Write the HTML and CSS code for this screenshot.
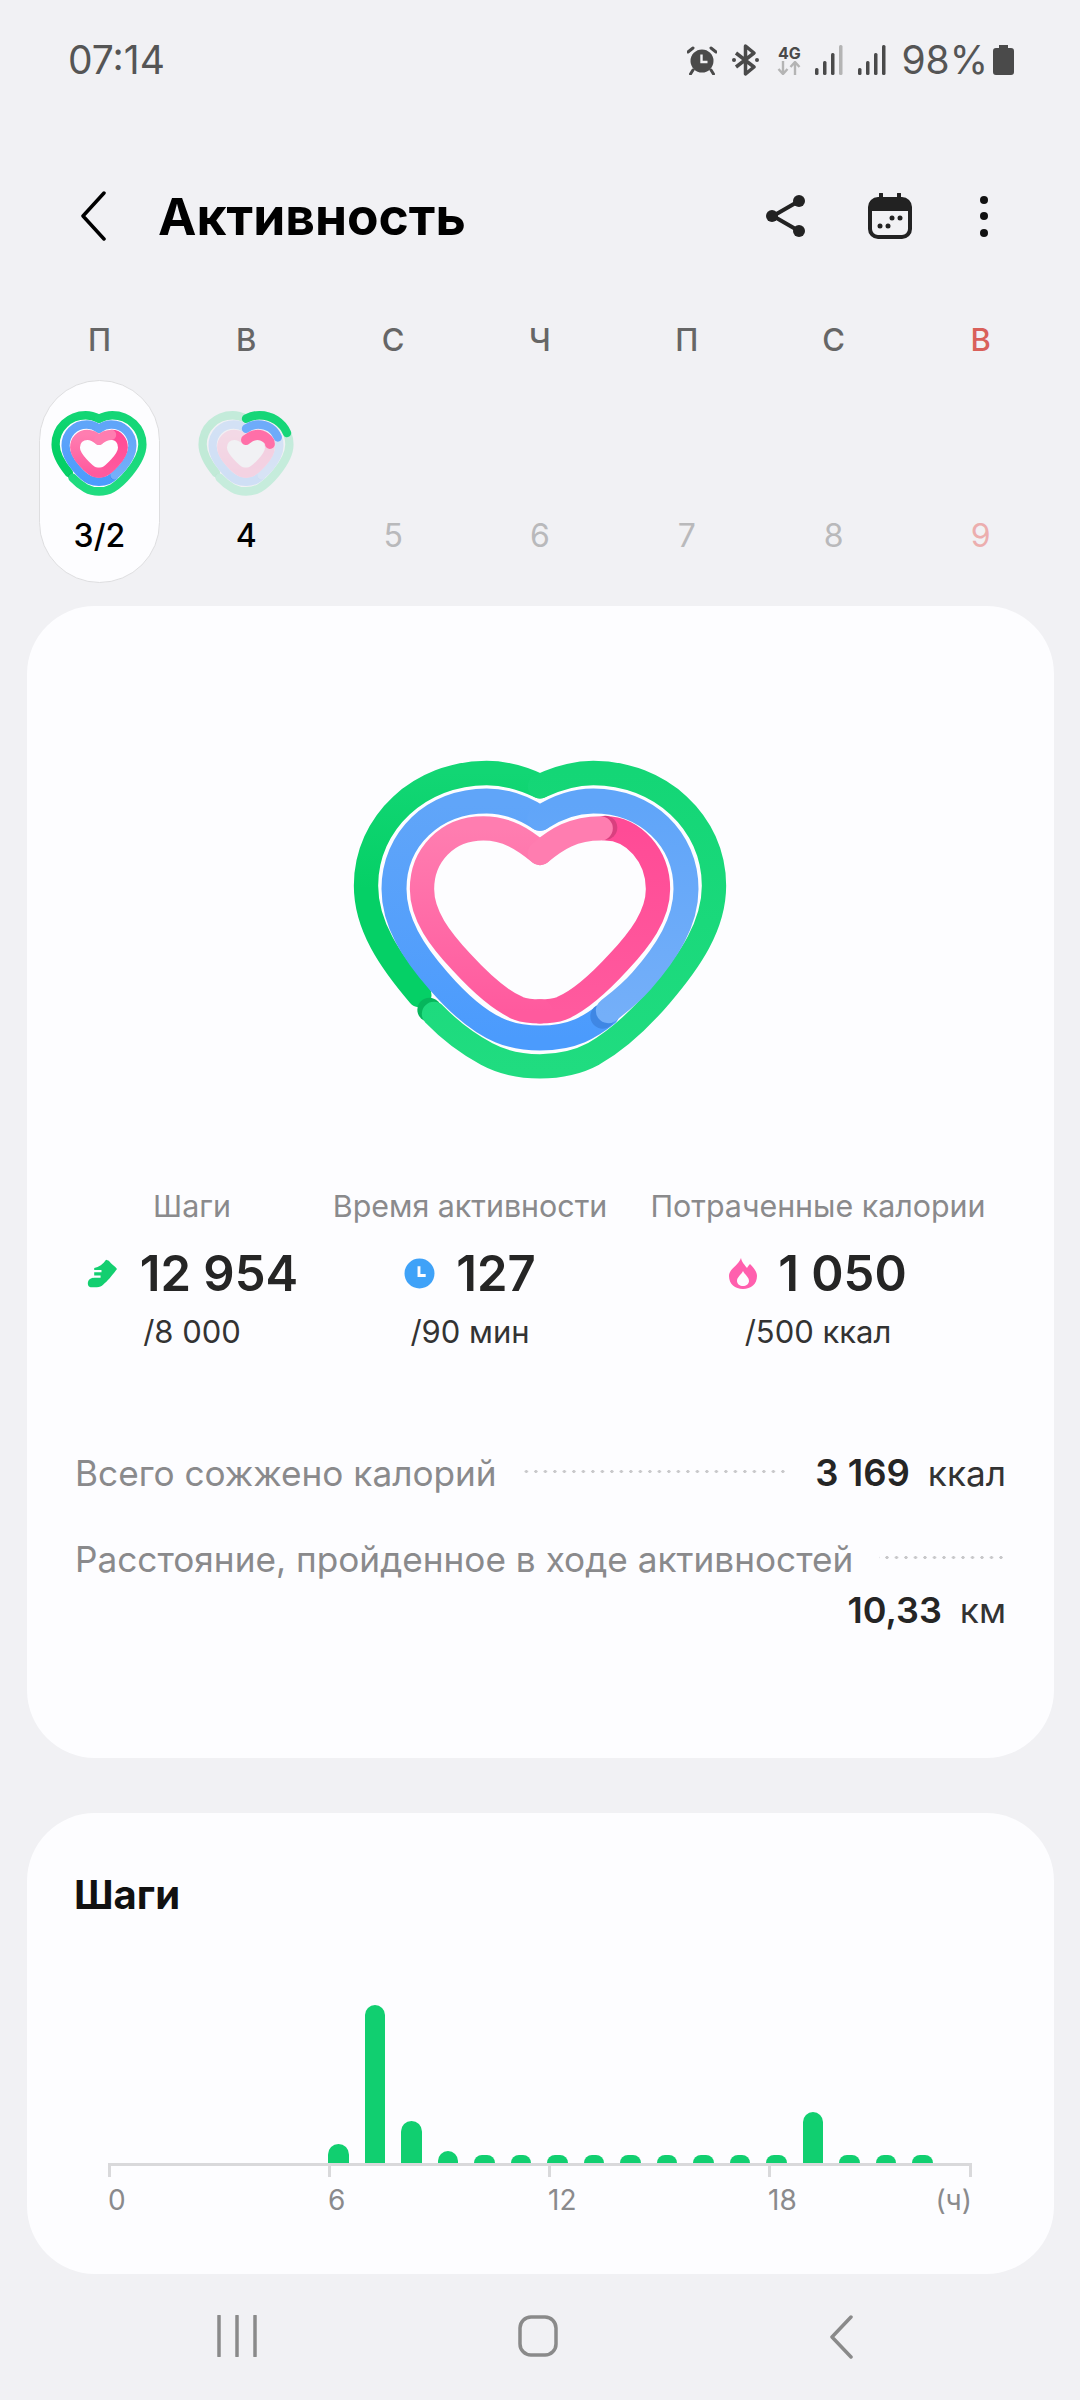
FILE: index.html
```html
<!DOCTYPE html>
<html lang="ru">

<head>
  <meta charset="UTF-8">
  <meta name="viewport" content="width=device-width, initial-scale=1.0">
  <title>Активность</title>
  <link rel="stylesheet" href="styles.css">
</head>

<body>
  <div class="status-bar">
    <span class="clock">07:14</span>
    <div class="status-icons">
      <svg class="st-alarm" viewBox="0 0 30 30">
        <circle cx="15" cy="16" r="11.500" fill="#4a4a4a" />
        <path d="M1 7 6 3M29 7 24 3M6 25 3.500 29M24 25 26.500 29" stroke="#4a4a4a" stroke-width="3" stroke-linecap="round" fill="none" />
        <path d="M14.500 9.500V17H20.500" stroke="#f1f1f4" stroke-width="2.400" fill="none" />
      </svg>
      <svg class="st-bt" viewBox="0 0 27 32">
        <path d="M4 9 22 23 13.500 30V2L22 9 4 23" stroke="#4a4a4a" stroke-width="3.500" fill="none" stroke-linejoin="round" />
        <circle cx="2" cy="16" r="2" fill="#4a4a4a" />
        <circle cx="25" cy="16" r="2" fill="#4a4a4a" />
      </svg>
      <div class="st-net">
        <span>4G</span>
        <svg viewBox="0 0 24 14">
          <path d="M6 0V12M1.500 8 6 13 10.500 8M18 14V2M13.500 6 18 1 22.500 6" stroke="#b4b4b4" stroke-width="2.400" fill="none" />
        </svg>
      </div>
      <svg class="st-signal" viewBox="0 0 28 30">
        <rect x="0" y="23" width="3.500" height="7" rx="1.500" fill="#4a4a4a" />
        <rect x="8" y="16" width="3.500" height="14" rx="1.500" fill="#4a4a4a" />
        <rect x="16" y="8" width="3.500" height="22" rx="1.500" fill="#4a4a4a" />
        <rect x="24" y="0" width="3.500" height="30" rx="1.500" fill="#b4b4b4" />
      </svg>
      <svg class="st-signal" viewBox="0 0 28 30">
        <rect x="0" y="23" width="3.500" height="7" rx="1.500" fill="#4a4a4a" />
        <rect x="8" y="16" width="3.500" height="14" rx="1.500" fill="#4a4a4a" />
        <rect x="16" y="8" width="3.500" height="22" rx="1.500" fill="#4a4a4a" />
        <rect x="24" y="0" width="3.500" height="30" rx="1.500" fill="#4a4a4a" />
      </svg>
      <span class="battery-text">98%</span>
      <svg class="st-battery" viewBox="0 0 21 30">
        <path d="M6 0H15V3H18Q21 3 21 6V27Q21 30 18 30H3Q0 30 0 27V6Q0 3 3 3H6Z" fill="#4a4a4a" />
      </svg>
    </div>
  </div>

  <header class="top-bar">
    <svg class="back" viewBox="0 0 26 50">
      <path d="M24 2 3 25 24 48" stroke="#000" stroke-width="3.500" fill="none" stroke-linecap="round" stroke-linejoin="round" />
    </svg>
    <h1>Активность</h1>
    <svg class="ic-share" viewBox="0 0 40 44">
      <path d="M7 22 33 7M7 22 33 37" stroke="#222" stroke-width="4" fill="none" />
      <circle cx="6" cy="22" r="6" fill="#222" />
      <circle cx="33" cy="7" r="6" fill="#222" />
      <circle cx="33" cy="37" r="6" fill="#222" />
    </svg>
    <svg class="ic-cal" viewBox="0 0 44 46">
      <path d="M13 1V8M31 1V8" stroke="#222" stroke-width="4" stroke-linecap="round" />
      <rect x="2" y="6" width="40" height="38" rx="8" fill="none" stroke="#222" stroke-width="4" />
      <path d="M2 18V13Q2 6 9 6H35Q42 6 42 13V18Z" fill="#222" />
      <circle cx="24" cy="25" r="2.500" fill="#222" />
      <circle cx="32" cy="25" r="2.500" fill="#222" />
      <circle cx="12" cy="33" r="2.500" fill="#222" />
      <circle cx="20" cy="33" r="2.500" fill="#222" />
    </svg>
    <div class="ic-more"><i></i><i></i><i></i></div>
  </header>

  <section class="week">
    <div class="wd">П</div>
    <div class="wd">В</div>
    <div class="wd">С</div>
    <div class="wd">Ч</div>
    <div class="wd">П</div>
    <div class="wd">С</div>
    <div class="wd sun">В</div>

    <div class="day selected">
      <svg class="mini-heart" viewBox="0 0 1260 1080">
        <defs>
          <linearGradient id="g-green" gradientUnits="userSpaceOnUse" x1="0" y1="100" x2="0" y2="450">
            <stop offset="0" stop-color="#12d674" />
            <stop offset="1" stop-color="#05d066" />
          </linearGradient>
          <linearGradient id="g-green-top" gradientUnits="userSpaceOnUse" x1="0" y1="100" x2="0" y2="1000">
            <stop offset="0" stop-color="#14d676" />
            <stop offset="1" stop-color="#20dc80" />
          </linearGradient>
          <linearGradient id="g-blue" gradientUnits="userSpaceOnUse" x1="0" y1="200" x2="0" y2="900">
            <stop offset="0" stop-color="#60a5f9" />
            <stop offset="1" stop-color="#4b9bfd" />
          </linearGradient>
          <linearGradient id="g-blue-top" gradientUnits="userSpaceOnUse" x1="0" y1="200" x2="0" y2="830">
            <stop offset="0" stop-color="#60a5f9" />
            <stop offset="1" stop-color="#74aff9" />
          </linearGradient>
          <linearGradient id="g-pink-left" gradientUnits="userSpaceOnUse" x1="0" y1="268" x2="0" y2="817">
            <stop offset="0" stop-color="#ff7db0" />
            <stop offset="1" stop-color="#ff5a9e" />
          </linearGradient>
          <linearGradient id="g-pink-right" gradientUnits="userSpaceOnUse" x1="0" y1="268" x2="0" y2="817">
            <stop offset="0" stop-color="#ff4b96" />
            <stop offset="1" stop-color="#ff5a9e" />
          </linearGradient>
          <g id="ring-green">
            <path stroke="url(#g-green)" d="M630 142C580 118 530 102 470 102C270 102 108 250 108 440C108 560 180 665 268 768" />
            <circle cx="298" cy="812" r="36" fill="#06b65c" stroke="none" />
            <path stroke="url(#g-green-top)" d="M312 825C370 885 420 918 470 945C520 972 570 982 630 982C690 982 740 972 790 945C860 905 935 835 992 768C1080 665 1152 560 1152 440C1152 250 990 102 790 102C730 102 680 118 630 142" />
          </g>
          <g id="ring-blue">
            <path stroke="url(#g-blue)" d="M630 238C580 205 530 186 470 186C310 186 192 300 192 450C192 550 250 640 325 725C390 800 450 850 510 875C550 892 590 897 630 897C670 897 710 892 750 875C780 862 805 845 830 825" />
            <circle cx="818" cy="832" r="37" fill="#3f87e4" stroke="none" />
            <path stroke="url(#g-blue-top)" d="M835 815C860 795 900 765 935 725C1010 640 1068 550 1068 450C1068 300 950 186 790 186C730 186 680 205 630 238" />
          </g>
          <g id="ring-pink">
            <path stroke="url(#g-pink-right)" d="M630 817C650 817 670 817 695 808C750 785 810 730 865 670C930 600 984 530 984 450C984 350 910 268 825 268" />
            <path stroke="url(#g-pink-left)" d="M630 342C580 300 530 268 460 268C350 268 276 350 276 450C276 530 330 600 395 670C450 730 510 785 565 808C590 817 610 817 630 817" />
            <circle cx="826" cy="266" r="36" fill="#d9407f" stroke="none" />
            <path stroke="#ff7db0" d="M812 268C730 268 680 300 630 342" />
          </g>
        </defs>
        <symbol id="heart" viewBox="0 0 1260 1080">
          <g fill="none" stroke-linecap="round" stroke-linejoin="round">
            <use href="#ring-green" stroke-width="73" />
            <use href="#ring-blue" stroke-width="75" />
            <use href="#ring-pink" stroke-width="73" />
          </g>
        </symbol>
        <symbol id="heart-mini" viewBox="0 0 1260 1080">
          <g fill="none" stroke-linecap="round" stroke-linejoin="round">
            <use href="#ring-green" stroke-width="100" transform="translate(19 14) scale(.97 1.01)" />
            <use href="#ring-blue" stroke-width="108" transform="translate(69 50) scale(.89 .94)" />
            <use href="#ring-pink" stroke-width="146" transform="translate(132 130) scale(.79 .805)" />
          </g>
        </symbol>
        <use href="#heart-mini" />
      </svg>
      <span class="num">3/2</span>
    </div>
    <div class="day">
      <svg class="mini-heart" viewBox="0 0 1260 1080">
        <use href="#heart-mini" class="faded" />
        <g fill="none" stroke-linecap="round">
          <path stroke="#16d678" stroke-width="100" transform="translate(19 14) scale(.97 1.01)" d="M630 142C680 118 730 102 790 102C940 102 1069 185 1123 306" />
          <path stroke="#6eabfa" stroke-width="108" transform="translate(69 50) scale(.89 .94)" d="M630 238C680 205 730 186 790 186C910 186 1006 250 1047 345" />
          <path stroke="#ff6fa8" stroke-width="146" transform="translate(132 130) scale(.79 .805)" d="M630 342C680 300 730 268 800 268C890 268 984 340 984 400" />
        </g>
      </svg>
      <span class="num">4</span>
    </div>
    <div class="day"><span class="num off">5</span></div>
    <div class="day"><span class="num off">6</span></div>
    <div class="day"><span class="num off">7</span></div>
    <div class="day"><span class="num off">8</span></div>
    <div class="day"><span class="num off-sun">9</span></div>
  </section>

  <section class="card summary">
    <svg class="big-heart" viewBox="0 0 1260 1080">
      <use href="#heart" />
    </svg>

    <div class="stats">
      <div class="stat">
        <div class="stat-label">Шаги</div>
        <div class="stat-value">
          <svg class="stat-ic" viewBox="8 10 36 34">
            <path d="M10 38C10 33 14 32 17 31V21C22 20 27 17 30 12L33 13C36 17 40 19 42 22C36 30 32 35 27 39C25 41 23 42 20 42H13C11 42 10 40 10 38Z" fill="#13cf70" />
            <path d="M15 24.500H25M15 30.500H24" stroke="#fdfdff" stroke-width="2.500" />
          </svg>
          <span>12 954</span>
        </div>
        <div class="stat-goal">/8 000</div>
      </div>
      <div class="stat">
        <div class="stat-label">Время активности</div>
        <div class="stat-value">
          <svg class="stat-ic" viewBox="0 0 30 30">
            <circle cx="15" cy="15" r="14.500" fill="#3fa2f8" />
            <path d="M14.500 8V17H21" stroke="#fdfdff" stroke-width="2.800" fill="none" />
          </svg>
          <span>127</span>
        </div>
        <div class="stat-goal">/90 мин</div>
      </div>
      <div class="stat">
        <div class="stat-label">Потраченные калории</div>
        <div class="stat-value">
          <svg class="stat-ic" viewBox="0 0 28 31">
            <path d="M12 0C13 5 16 7 18 10 19 8 20 7 21 6 25 10 28 14 28 18 28 26 22 31 14 31 6 31 0 26 0 18 0 11 9 8 12 0Z" fill="#ff5fae" />
            <path d="M14 13C16 17 20 19 20 23 20 26 17 28 14 28 11 28 8 26 8 23 8 19 12 17 14 13Z" fill="#fdfdff" />
          </svg>
          <span>1 050</span>
        </div>
        <div class="stat-goal">/500 ккал</div>
      </div>
    </div>

    <div class="total-row">
      <span class="total-name">Всего сожжено калорий</span>
      <span class="dots"></span>
      <span class="total-val"><b>3 169</b>ккал</span>
    </div>
    <div class="total-row">
      <span class="total-name">Расстояние, пройденное в ходе активностей</span>
      <span class="dots"></span>
      <span class="total-val"><b>10,33</b>км</span>
    </div>
  </section>

  <section class="card steps">
    <h2>Шаги</h2>
    <div class="chart">
      <div class="bars">
        <div class="bar" style="height:19px"></div>
        <div class="bar" style="height:158px"></div>
        <div class="bar" style="height:42px"></div>
        <div class="bar" style="height:12px"></div>
        <div class="bar" style="height:8px"></div>
        <div class="bar" style="height:8px"></div>
        <div class="bar" style="height:8px"></div>
        <div class="bar" style="height:8px"></div>
        <div class="bar" style="height:8px"></div>
        <div class="bar" style="height:8px"></div>
        <div class="bar" style="height:8px"></div>
        <div class="bar" style="height:8px"></div>
        <div class="bar" style="height:8px"></div>
        <div class="bar" style="height:51px"></div>
        <div class="bar" style="height:8px"></div>
        <div class="bar" style="height:8px"></div>
        <div class="bar" style="height:8px"></div>
      </div>
      <div class="axis">
        <div class="tick"></div>
        <div class="tick"></div>
        <div class="tick"></div>
        <div class="tick last"></div>
        <span>0</span>
        <span>6</span>
        <span>12</span>
        <span class="hour-wrap"><span>18</span><span>(ч)</span></span>
      </div>
    </div>
  </section>

  <nav class="nav-bar">
    <svg class="nav-ic" viewBox="0 0 40 42">
      <path d="M2 1V41M20 1V41M38 1V41" stroke="#8a8a8a" stroke-width="3.500" stroke-linecap="round" />
    </svg>
    <svg class="nav-ic home-nav" viewBox="0 0 40 42">
      <rect x="2" y="2" width="36" height="38" rx="11" fill="none" stroke="#8a8a8a" stroke-width="3.500" />
    </svg>
    <svg class="nav-ic back-nav" viewBox="0 0 24 44">
      <path d="M22 2 3 22 22 42" stroke="#8a8a8a" stroke-width="3.500" fill="none" stroke-linecap="round" stroke-linejoin="round" />
    </svg>
  </nav>
</body>

</html>
```

FILE: styles.css
```css
* {
  margin: 0;
  padding: 0;
  box-sizing: border-box;
}

html,
body {
  width: 1080px;
  height: 2400px;
  overflow: hidden;
}

body {
  background: #f1f1f4;
  font-family: Inter, "Noto Sans", sans-serif;
  color: #222;
}

/* status bar */
.status-bar {
  height: 120px;
  padding: 41px 66px 0 68px;
  display: flex;
  justify-content: space-between;
  align-items: flex-start;
}

.clock,
.battery-text {
  font-size: 39px;
  line-height: 38px;
  color: #555;
}

.status-icons {
  display: flex;
  align-items: center;
  height: 38px;
}

.st-alarm {
  width: 30px;
  height: 30px;
  margin-right: 15px;
}

.st-bt {
  width: 27px;
  height: 32px;
  margin-right: 18px;
}

.st-net {
  width: 24px;
  margin-right: 14px;
  display: flex;
  flex-direction: column;
  align-items: center;
}

.st-net span {
  font-size: 16px;
  line-height: 16px;
  font-weight: 700;
  color: #4a4a4a;
}

.st-net svg {
  width: 24px;
  height: 14px;
}

.st-signal {
  width: 28px;
  height: 30px;
  margin-right: 15px;
}

.battery-text {
  margin-right: 5px;
}

.st-battery {
  width: 21px;
  height: 30px;
}

/* top bar */
.top-bar {
  height: 192px;
  padding: 0 0 0 80px;
  display: flex;
  align-items: center;
}

.back {
  width: 26px;
  height: 50px;
  flex: none;
}

.top-bar h1 {
  font-size: 51.500px;
  font-weight: 700;
  color: #000;
  margin-left: 52px;
  flex: 1;
}

.ic-share {
  width: 40px;
  height: 44px;
  margin-right: 62px;
}

.ic-cal {
  width: 44px;
  height: 46px;
  margin-right: 68px;
}

.ic-more {
  width: 8px;
  margin-right: 92px;
  display: flex;
  flex-direction: column;
  gap: 8.500px;
}

.ic-more i {
  display: block;
  width: 8px;
  height: 8px;
  border-radius: 50%;
  background: #111;
}

/* week strip */
.week {
  padding: 0 26px;
  display: grid;
  grid-template-columns: repeat(7, 1fr);
}

.wd {
  height: 68px;
  padding-top: 8px;
  text-align: center;
  font-size: 31px;
  line-height: 40px;
  font-weight: 500;
  color: #666;
}

.wd.sun {
  color: #d9605a;
}

.day {
  height: 203px;
  width: 121px;
  justify-self: center;
  border-radius: 61px;
  border: 1px solid transparent;
  display: flex;
  flex-direction: column;
  align-items: center;
  padding-top: 24px;
  position: relative;
}

.day.selected {
  background: #fdfdff;
  border-color: #dedee0;
}

.mini-heart {
  width: 108px;
  height: 93px;
  flex: none;
}

.faded {
  opacity: .2;
}

.num {
  position: absolute;
  left: 0;
  right: 0;
  bottom: 26px;
  text-align: center;
  font-size: 32px;
  line-height: 40px;
  font-weight: 500;
  color: #000;
}

.num.off {
  color: #b9b9bb;
  font-weight: 400;
}

.num.off-sun {
  color: #ecaeae;
  font-weight: 400;
}

/* cards */
.card {
  margin: 0 26px 0 27px;
  background: #fdfdff;
  border-radius: 68px;
}

.summary {
  height: 1152px;
  margin-top: 23px;
  padding: 133px 48px 0;
}

.big-heart {
  display: block;
  width: 420px;
  height: 360px;
  margin-left: 255px;
}

.stats {
  margin-top: 85px;
  margin-left: 12.500px;
  display: grid;
  grid-template-columns: 209px 275px 349px;
  column-gap: 36px;
  white-space: nowrap;
}

.stat {
  display: flex;
  flex-direction: column;
  align-items: center;
}

.stat-label {
  font-size: 30.400px;
  line-height: 44px;
  color: #8a8a8c;
}

.stat-value {
  height: 74px;
  margin-top: 8px;
  display: flex;
  align-items: center;
  gap: 21px;
  font-size: 49px;
  font-weight: 600;
  color: #252525;
}

.stat-ic {
  height: 31px;
  width: auto;
}

.stat-goal {
  font-size: 31px;
  line-height: 40px;
  margin-top: 2px;
  color: #333;
}

.total-row {
  display: flex;
  flex-wrap: wrap;
  align-items: center;
  white-space: nowrap;
  margin-top: 20px;
  font-size: 35.200px;
  line-height: 66px;
}

.stats + .total-row {
  margin-top: 88px;
}

.total-name {
  color: #8a8a8c;
}

.dots {
  flex: 1;
  height: 3px;
  margin-left: 26px;
  margin-top: -4px;
  background: radial-gradient(circle, #c8c8ca 1.400px, transparent 1.800px) right center / 9.500px 3px repeat-x;
}

.total-val {
  margin-left: 28px;
  color: #333;
}

.total-row:last-child .total-val {
  margin-left: auto;
  line-height: 40px;
  margin-top: -2px;
}

.total-val b {
  margin-right: 18px;
  font-size: 36.500px;
  font-weight: 600;
  color: #252525;
}

.total-row:last-child .total-val b {
  font-size: 36px;
}

.steps {
  height: 461px;
  margin-top: 55px;
  padding: 59px 0 0 47px;
}

.steps h2 {
  font-size: 40px;
  line-height: 46px;
  font-weight: 700;
  color: #111;
}

.chart {
  margin-top: 69px;
  margin-left: 34px;
  width: 864px;
}

.bars {
  height: 176px;
  padding-left: 220px;
  display: flex;
  align-items: flex-end;
  gap: 16px;
}

.bar {
  width: 20.500px;
  background: #11cf70;
  border-radius: 11px 11px 0 0;
}

.axis {
  border-top: 3px solid #d9d9db;
  display: grid;
  grid-template-columns: 220px 220px 220px 1fr;
  font-size: 28px;
  color: #8a8a8c;
}

.tick {
  height: 11px;
  border-left: 3px solid #d9d9db;
}

.tick.last {
  border-right: 3px solid #d9d9db;
}

.axis span {
  line-height: 46px;
}

.hour-wrap {
  display: flex;
  justify-content: space-between;
}

/* nav bar */
.nav-bar {
  height: 127px;
  padding: 41px 0 0 217px;
  display: flex;
  align-items: flex-start;
}

.nav-ic {
  width: 40px;
  height: 42px;
}

.home-nav {
  margin-left: 261px;
}

.back-nav {
  width: 24px;
  height: 44px;
  margin-left: 271px;
}
```
